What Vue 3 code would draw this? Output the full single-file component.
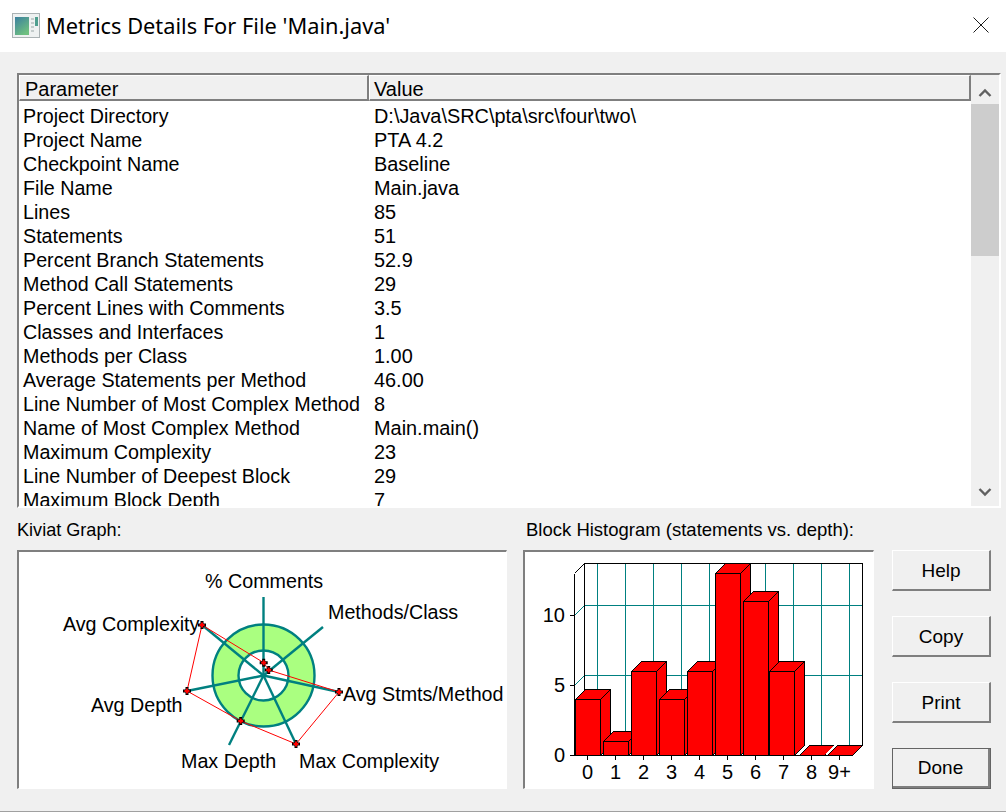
<script setup>
const rows = [
  ['Project Directory', 'D:\\Java\\SRC\\pta\\src\\four\\two\\'],
  ['Project Name', 'PTA 4.2'],
  ['Checkpoint Name', 'Baseline'],
  ['File Name', 'Main.java'],
  ['Lines', '85'],
  ['Statements', '51'],
  ['Percent Branch Statements', '52.9'],
  ['Method Call Statements', '29'],
  ['Percent Lines with Comments', '3.5'],
  ['Classes and Interfaces', '1'],
  ['Methods per Class', '1.00'],
  ['Average Statements per Method', '46.00'],
  ['Line Number of Most Complex Method', '8'],
  ['Name of Most Complex Method', 'Main.main()'],
  ['Maximum Complexity', '23'],
  ['Line Number of Deepest Block', '29'],
  ['Maximum Block Depth', '7'],
]
const buttons = ['Help', 'Copy', 'Print', 'Done']

const cx = 263.5
const cy = 675.5
const spokes = [[263.5, 597], [323, 627], [339, 692], [296, 744], [229, 745], [187, 691], [202, 625]]
const poly = [[202, 625], [263.7, 662.7], [268.7, 670], [339, 692], [296, 744], [240.7, 721], [187, 691]]
const polyPoints = poly.map((p) => p.join(',')).join(' ')
const kivLabels = [
  ['% Comments', 205, 588],
  ['Methods/Class', 328, 619],
  ['Avg Stmts/Method', 343, 701],
  ['Max Complexity', 299, 768],
  ['Max Depth', 181, 768],
  ['Avg Depth', 91, 712],
  ['Avg Complexity', 63, 631],
]

const base = 755.5
const unit = 14
const values = [4, 1, 6, 4, 6, 13, 11, 6, 0, 0]
const xLabels = ['0', '1', '2', '3', '4', '5', '6', '7', '8', '9+']
const bars = values.map((v, i) => {
  const x = i === 7 ? 769.5 : 575.5 + i * 28
  const w = 25
  const top = base - v * unit
  const d = 10
  return {
    key: i,
    zero: v === 0,
    front: `${x},${top} ${x + w},${top} ${x + w},${base} ${x},${base}`,
    top: `${x},${top} ${x + d},${top - d} ${x + w + d},${top - d} ${x + w},${top}`,
    side: `${x + w},${top} ${x + w + d},${top - d} ${x + w + d},${base - d} ${x + w},${base}`,
    shadow: `M${x - 1} ${base}L${x + 9} ${base - 10}`,
  }
})
const gridX = Array.from({ length: 10 }, (_, i) => 597.5 + i * 28)
const tickX = Array.from({ length: 10 }, (_, i) => 587.5 + i * 28)
</script>

<template>
  <div class="window">
    <header class="title">
      <svg class="app-icon" width="28" height="25" viewBox="0 0 28 25">
        <defs>
          <linearGradient id="ig" x1="0" y1="0" x2="0.6" y2="1">
            <stop offset="0" stop-color="#3a7f9f" />
            <stop offset="1" stop-color="#6fc080" />
          </linearGradient>
        </defs>
        <rect x="0.5" y="0.5" width="27" height="24" fill="#eef1f1" stroke="#aab2b4" />
        <rect x="3" y="4" width="14" height="18" fill="url(#ig)" />
        <rect x="19" y="5" width="3" height="2" fill="#c4cccc" />
        <rect x="19" y="9" width="3" height="2" fill="#c4cccc" />
        <rect x="19" y="13" width="3" height="2" fill="#c4cccc" />
        <rect x="19" y="17" width="3" height="2" fill="#c4cccc" />
        <rect x="23" y="4" width="3" height="9" fill="#4f9f8f" />
      </svg>
      <span class="title-text">Metrics Details For File 'Main.java'</span>
      <svg class="close" width="16" height="16" viewBox="0 0 16 16">
        <path d="M0.5 0.5L15.5 15.5M15.5 0.5L0.5 15.5" stroke="#1a1a1a" stroke-width="1" fill="none" />
      </svg>
    </header>

    <main class="body">
      <section class="table">
        <div class="table-main">
          <div class="thead">
            <div class="th th-param">Parameter</div>
            <div class="th th-value">Value</div>
          </div>
          <div class="tbody">
            <div v-for="r in rows" :key="r[0]" class="row">
              <span class="c-param">{{ r[0] }}</span>
              <span class="c-value">{{ r[1] }}</span>
            </div>
          </div>
        </div>
        <div class="scroll">
          <svg class="arrow" width="14" height="10" viewBox="0 0 14 10">
            <path d="M1.5 8L7 2.5L12.5 8" stroke="#606060" stroke-width="2.4" fill="none" />
          </svg>
          <div class="thumb"></div>
          <div class="track"></div>
          <svg class="arrow" width="14" height="10" viewBox="0 0 14 10">
            <path d="M1.5 2L7 7.5L12.5 2" stroke="#606060" stroke-width="2.4" fill="none" />
          </svg>
        </div>
      </section>

      <section class="lower">
        <div class="col col-kiviat">
          <div class="label">Kiviat Graph:</div>
          <div class="frame">
            <svg class="chart" width="487" height="236" viewBox="19 552 487 236">
              <circle :cx="cx" :cy="cy" r="51" fill="#aaff80" stroke="#008080" stroke-width="2.4" />
              <circle :cx="cx" :cy="cy" r="25" fill="#fff" stroke="#008080" stroke-width="2.4" />
              <line v-for="(s, i) in spokes" :key="i" :x1="cx" :y1="cy" :x2="s[0]" :y2="s[1]" stroke="#008080" stroke-width="2.4" />
              <polygon :points="polyPoints" fill="none" stroke="#f00" stroke-width="1" />
              <g v-for="(p, i) in poly" :key="'m' + i">
                <path :d="`M${p[0] - 4} ${p[1]}H${p[0] + 4}M${p[0]} ${p[1] - 4}V${p[1] + 4}`" stroke="#000" stroke-width="3" />
                <path :d="`M${p[0] - 2.5} ${p[1]}H${p[0] + 2.5}M${p[0]} ${p[1] - 2.5}V${p[1] + 2.5}`" stroke="#f00" stroke-width="2" />
              </g>
              <text v-for="l in kivLabels" :key="l[0]" :x="l[1]" :y="l[2]" class="chart-text">{{ l[0] }}</text>
            </svg>
          </div>
        </div>

        <div class="col col-hist">
          <div class="label label-hist">Block Histogram (statements vs. depth):</div>
          <div class="frame">
            <svg class="chart crisp" width="347" height="236" viewBox="525 552 347 236">
              <path d="M584.5 563.5H862.5V745.5H584.5Z" fill="#fff" stroke="none" />
              <path v-for="x in gridX" :key="x" :d="`M${x} 563.5V745.5`" stroke="#008080" stroke-width="1" />
              <path d="M584.5 605.5H862.5M584.5 675.5H862.5" stroke="#008080" stroke-width="1" />
              <path d="M574.5 615.5L584.5 605.5M574.5 685.5L584.5 675.5" stroke="#008080" stroke-width="1" />
              <path d="M584.5 745.5V563.5H862.5V745.5M574.5 573.5L584.5 563.5M574.5 573.5V755.5M569.5 615.5H574.5M569.5 685.5H574.5M569.5 755.5H852.5L862.5 745.5" fill="none" stroke="#000" stroke-width="1" />
              <path v-for="x in tickX" :key="'t' + x" :d="`M${x} 755V760`" stroke="#000" stroke-width="1" />
              <g v-for="b in bars" :key="b.key">
                <path v-if="b.zero" :d="b.shadow" stroke="#fff" stroke-width="3" />
                <polygon :points="b.side" fill="#f00" stroke="#000" />
                <polygon :points="b.top" fill="#f00" stroke="#000" />
                <polygon :points="b.front" fill="#f00" stroke="#000" />
              </g>
              <text x="565" y="622" text-anchor="end" class="chart-text chart-num">10</text>
              <text x="565" y="692" text-anchor="end" class="chart-text chart-num">5</text>
              <text x="565" y="762" text-anchor="end" class="chart-text chart-num">0</text>
              <text v-for="(l, i) in xLabels" :key="'x' + l" :x="tickX[i]" y="779" text-anchor="middle" class="chart-text chart-num">{{ l }}</text>
            </svg>
          </div>
        </div>

        <div class="buttons">
          <button v-for="b in buttons" :key="b" class="btn" :class="{ 'btn-default': b === 'Done' }">{{ b }}</button>
        </div>
      </section>
    </main>
  </div>
</template>

<style>
html, body { margin: 0; background: #f0f0f0; }
</style>

<style scoped>
.window {
  width: 1006px;
  height: 812px;
  box-sizing: border-box;
  display: flex;
  flex-direction: column;
  background: #f0f0f0;
  border-bottom: 1px solid #a0a0a0;
  font-family: "Liberation Sans", Arial, sans-serif;
  color: #000;
  overflow: hidden;
}
.title {
  height: 52px;
  box-sizing: border-box;
  flex: none;
  background: #fff;
  display: flex;
  align-items: center;
  padding: 0 17px 2px 12px;
}
.app-icon { flex: none; margin-right: 6px; margin-top: 1px; }
.title-text {
  font-family: "Noto Sans", "Open Sans", sans-serif;
  font-size: 21.8px;
  flex: 1;
}
.close { flex: none; }
.body {
  flex: 1;
  display: flex;
  flex-direction: column;
  padding: 21px 5px 0 17px;
  min-height: 0;
}
.table {
  height: 435px;
  flex: none;
  box-sizing: border-box;
  display: flex;
  border-top: 2px solid #7f7f7f;
  border-left: 2px solid #7f7f7f;
  border-right: 2px solid #fff;
  border-bottom: 2px solid #fff;
  overflow: hidden;
}
.table-main {
  width: 952px;
  flex: none;
  background: #fff;
  display: flex;
  flex-direction: column;
  min-height: 0;
}
.thead {
  display: flex;
  flex: none;
  height: 26px;
  background: #f0f0f0;
  font-size: 20px;
}
.th {
  box-sizing: border-box;
  height: 26px;
  line-height: 26px;
  border-top: 1px solid #fff;
  border-left: 1px solid #fff;
  border-right: 2px solid #7f7f7f;
  border-bottom: 2px solid #7f7f7f;
}
.th-param { width: 350px; padding-left: 5px; flex: none; }
.th-value { flex: 1; padding-left: 4px; }
.tbody {
  flex: 1;
  min-height: 0;
  overflow: hidden;
  padding-top: 3px;
  font-size: 19.7px;
}
.row {
  height: 24px;
  line-height: 24px;
  display: flex;
  white-space: nowrap;
}
.c-param { width: 351px; padding-left: 4px; box-sizing: border-box; flex: none; }
.c-value { padding-left: 4px; font-size: 19.9px; }
.scroll {
  flex: 1;
  display: flex;
  flex-direction: column;
  align-items: center;
  background: #f0f0f0;
  padding: 13px 0 9px;
}
.arrow { flex: none; }
.thumb {
  flex: none;
  width: 100%;
  height: 152px;
  background: #cdcdcd;
  margin-top: 6px;
}
.track { flex: 1; }
.lower {
  flex: 1;
  display: flex;
  min-height: 0;
}
.col { display: flex; flex-direction: column; flex: none; }
.col-kiviat { width: 490px; margin-right: 16px; }
.col-hist { width: 351px; margin-right: 18px; }
.label {
  height: 42px;
  flex: none;
  box-sizing: border-box;
  padding-top: 10px;
  line-height: 24px;
  font-size: 18.1px;
  white-space: nowrap;
}
.label-hist { font-size: 18.5px; padding-left: 3px; }
.frame {
  box-sizing: border-box;
  height: 239px;
  background: #fff;
  border-top: 2px solid #7f7f7f;
  border-left: 2px solid #7f7f7f;
  border-right: 1px solid #fff;
  border-bottom: 1px solid #fff;
  overflow: hidden;
}
.chart { display: block; }
.crisp path, .crisp polygon { shape-rendering: crispEdges; }
.chart-text {
  font-family: "Liberation Sans", Arial, sans-serif;
  font-size: 19.7px;
  fill: #000;
}
.chart-num { font-size: 20px; }
.buttons {
  flex: none;
  width: 99px;
  height: 239px;
  margin-top: 42px;
  display: flex;
  flex-direction: column;
  justify-content: space-between;
}
.btn {
  height: 41px;
  width: 99px;
  padding: 1px 0 0;
  box-sizing: border-box;
  background: #f0f0f0;
  border-top: 1px solid #fff;
  border-left: 1px solid #fff;
  border-right: 2px solid #7f7f7f;
  border-bottom: 2px solid #7f7f7f;
  font-family: "Liberation Sans", Arial, sans-serif;
  font-size: 19px;
  color: #000;
}
.btn-default {
  outline: 1px solid #646464;
  outline-offset: -1px;
  border-right-width: 3px;
  border-bottom-width: 3px;
}
</style>
